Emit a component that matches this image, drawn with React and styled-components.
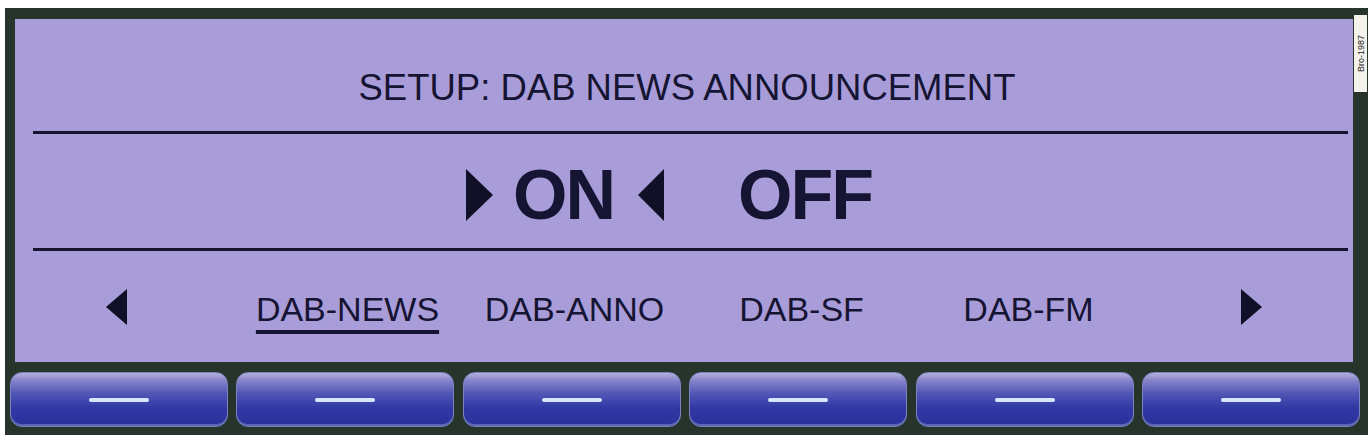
import React from 'react';
import styled, { createGlobalStyle } from 'styled-components';

const GlobalStyle = createGlobalStyle`
  html, body {
    margin: 0;
    padding: 0;
    background: #ffffff;
  }
  #root {
    width: 1371px;
    height: 440px;
  }
`;

const Frame = styled.div`
  position: relative;
  box-sizing: border-box;
  margin: 8px 3px 0 5px;
  height: 427px;
  background: #27342b;
  display: flex;
  flex-direction: column;
`;

const Panel = styled.div`
  margin: 11px 15px 0 10px;
  height: 343px;
  background: #a99dd9;
  display: flex;
  flex-direction: column;
  color: #161433;
  font-family: "Liberation Sans", Arial, sans-serif;
`;

const TitleRow = styled.div`
  box-sizing: border-box;
  height: 112px;
  padding: 26px 0 0 6px;
  display: flex;
  align-items: center;
  justify-content: center;
  font-size: 36.5px;
`;

const Rule = styled.div`
  height: 3px;
  margin: 0 5px 0 18px;
  background: #15132e;
`;

const ChoiceRow = styled.div`
  box-sizing: border-box;
  height: 114px;
  padding: 8px 30px 0 0;
  display: flex;
  align-items: center;
  justify-content: center;
`;

const Choice = styled.span`
  font-size: 70px;
  font-weight: bold;
  letter-spacing: -2px;
  line-height: 1;
  margin: ${(p) => p.$margin || '0'};
`;

const TabRow = styled.div`
  height: 111px;
  display: grid;
  grid-template-columns: repeat(6, 227px);
  justify-content: center;
  align-items: center;
  justify-items: center;
`;

const Tab = styled.span`
  font-size: 34px;
  line-height: 1;
  padding-top: 4px;
  margin-left: 8px;
  text-decoration: ${(p) => (p.$active ? 'underline' : 'none')};
  text-decoration-thickness: 4px;
  text-underline-offset: 9px;
`;

const Buttons = styled.div`
  margin-top: 10px;
  height: 55px;
  padding: 0 8px 0 5px;
  display: flex;
  gap: 8.6px;
`;

const SoftKey = styled.div`
  flex: 1;
  box-sizing: border-box;
  border-radius: 12px;
  border: 1px solid #7a84c0;
  background: linear-gradient(
    to bottom,
    #b4b0dc 0%,
    #8684ca 14%,
    #5257b6 38%,
    #3138a4 66%,
    #29309a 100%
  );
  box-shadow: inset 0 -2px 0 #5a66b2;
  display: flex;
  align-items: center;
  justify-content: center;
`;

const Dash = styled.div`
  width: 60px;
  height: 4px;
  border-radius: 2px;
  background: #d8e6ff;
`;

const Badge = styled.div`
  position: absolute;
  top: 7px;
  right: 1px;
  width: 13px;
  height: 77px;
  background: #f3f3ec;
  color: #1a1a1a;
  font-family: "Liberation Sans", Arial, sans-serif;
  font-size: 9px;
  display: flex;
  align-items: center;
  justify-content: center;
  writing-mode: vertical-rl;
  transform: rotate(180deg);
`;

const Arrow = ({ dir, w, h, margin }) => (
  <svg width={w} height={h} viewBox="0 0 10 20" style={{ margin }} preserveAspectRatio="none">
    {dir === 'right' ? (
      <polygon points="0,0 10,10 0,20" fill="#101026" />
    ) : (
      <polygon points="10,0 0,10 10,20" fill="#101026" />
    )}
  </svg>
);

const tabs = ['DAB-NEWS', 'DAB-ANNO', 'DAB-SF', 'DAB-FM'];

export default function App() {
  return (
    <>
      <GlobalStyle />
      <Frame>
        <Panel>
          <TitleRow>SETUP: DAB NEWS ANNOUNCEMENT</TitleRow>
          <Rule />
          <ChoiceRow>
            <Arrow dir="right" w={27} h={52} margin="0 20px 0 0" />
            <Choice>ON</Choice>
            <Arrow dir="left" w={26} h={52} margin="0 0 0 24px" />
            <Choice $margin="0 0 0 74px">OFF</Choice>
          </ChoiceRow>
          <Rule />
          <TabRow>
            <Arrow dir="left" w={21} h={36} />
            {tabs.map((t, i) => (
              <Tab key={t} $active={i === 0}>{t}</Tab>
            ))}
            <Arrow dir="right" w={21} h={36} />
          </TabRow>
        </Panel>
        <Buttons>
          {[0, 1, 2, 3, 4, 5].map((i) => (
            <SoftKey key={i}>
              <Dash />
            </SoftKey>
          ))}
        </Buttons>
        <Badge>Bro-1987</Badge>
      </Frame>
    </>
  );
}
